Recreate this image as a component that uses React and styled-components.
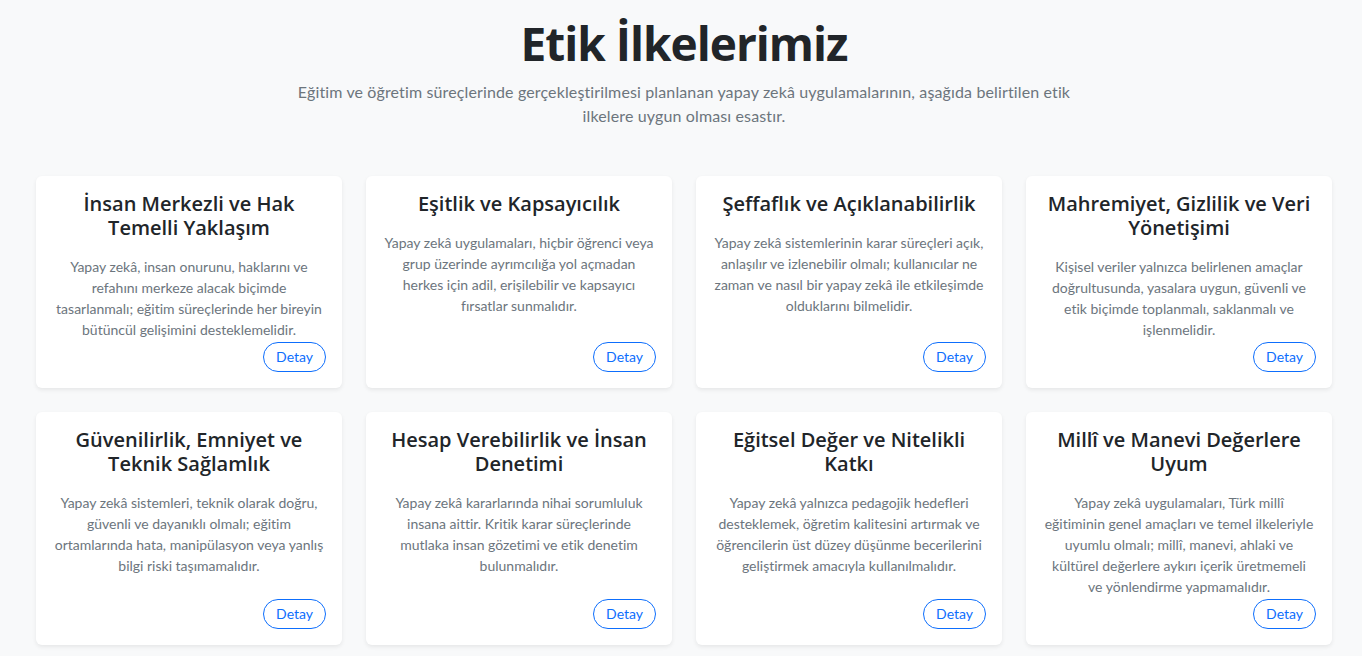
import React from "react";
import styled, { createGlobalStyle } from "styled-components";

const GlobalStyle = createGlobalStyle`
  * {
    box-sizing: border-box;
  }
  body {
    margin: 0;
    background: #f8f9fa;
    font-family: Lato, "Open Sans", sans-serif;
    font-variant-ligatures: none;
    color: #212529;
  }
`;

const Page = styled.section`
  max-width: 1320px;
  margin: 0 auto;
  padding: 15px 9px 24px 15px;
`;

const Header = styled.header`
  text-align: center;
  margin-bottom: 48px;
`;

const Title = styled.h1`
  margin: 0 0 8px;
  font-family: "Open Sans", sans-serif;
  font-size: 46px;
  line-height: 57px;
  font-weight: 700;
  letter-spacing: -1px;
  color: #212529;
`;

const Lead = styled.p`
  margin: 0 auto;
  max-width: 800px;
  font-size: 16px;
  line-height: 24px;
  letter-spacing: 0.13px;
  color: #6c757d;
`;

const Grid = styled.div`
  display: grid;
  grid-template-columns: repeat(4, 1fr);
  gap: 24px;
`;

const Card = styled.article`
  background: #fff;
  border-radius: 6px;
  box-shadow: 0 2px 4px rgba(0, 0, 0, 0.075);
  padding: 16px;
  display: flex;
  flex-direction: column;
  text-align: center;
`;

const CardTitle = styled.h3`
  margin: 0 0 16px;
  font-family: "Open Sans", sans-serif;
  font-size: 20px;
  line-height: 24px;
  font-weight: 600;
  color: #212529;
`;

const CardText = styled.p`
  margin: 0 0 2px;
  padding: 0 2.25px;
  font-size: 14px;
  line-height: 21px;
  color: #6c757d;
`;

const DetailButton = styled.button`
  margin-top: auto;
  align-self: flex-end;
  background: transparent;
  border: 1px solid #0d6efd;
  color: #0d6efd;
  border-radius: 999px;
  padding: 4px 12px;
  font-family: inherit;
  font-size: 14px;
  line-height: 20px;
  cursor: pointer;
`;

const principles = [
  {
    title: "İnsan Merkezli ve Hak Temelli Yaklaşım",
    text: "Yapay zekâ, insan onurunu, haklarını ve refahını merkeze alacak biçimde tasarlanmalı; eğitim süreçlerinde her bireyin bütüncül gelişimini desteklemelidir.",
  },
  {
    title: "Eşitlik ve Kapsayıcılık",
    text: "Yapay zekâ uygulamaları, hiçbir öğrenci veya grup üzerinde ayrımcılığa yol açmadan herkes için adil, erişilebilir ve kapsayıcı fırsatlar sunmalıdır.",
  },
  {
    title: "Şeffaflık ve Açıklanabilirlik",
    text: "Yapay zekâ sistemlerinin karar süreçleri açık, anlaşılır ve izlenebilir olmalı; kullanıcılar ne zaman ve nasıl bir yapay zekâ ile etkileşimde olduklarını bilmelidir.",
  },
  {
    title: "Mahremiyet, Gizlilik ve Veri Yönetişimi",
    text: "Kişisel veriler yalnızca belirlenen amaçlar doğrultusunda, yasalara uygun, güvenli ve etik biçimde toplanmalı, saklanmalı ve işlenmelidir.",
  },
  {
    title: "Güvenilirlik, Emniyet ve Teknik Sağlamlık",
    text: "Yapay zekâ sistemleri, teknik olarak doğru, güvenli ve dayanıklı olmalı; eğitim ortamlarında hata, manipülasyon veya yanlış bilgi riski taşımamalıdır.",
  },
  {
    title: "Hesap Verebilirlik ve İnsan Denetimi",
    text: "Yapay zekâ kararlarında nihai sorumluluk insana aittir. Kritik karar süreçlerinde mutlaka insan gözetimi ve etik denetim bulunmalıdır.",
  },
  {
    title: "Eğitsel Değer ve Nitelikli Katkı",
    text: "Yapay zekâ yalnızca pedagojik hedefleri desteklemek, öğretim kalitesini artırmak ve öğrencilerin üst düzey düşünme becerilerini geliştirmek amacıyla kullanılmalıdır.",
  },
  {
    title: "Millî ve Manevi Değerlere Uyum",
    text: "Yapay zekâ uygulamaları, Türk millî eğitiminin genel amaçları ve temel ilkeleriyle uyumlu olmalı; millî, manevi, ahlaki ve kültürel değerlere aykırı içerik üretmemeli ve yönlendirme yapmamalıdır.",
  },
];

export default function App() {
  return (
    <>
      <GlobalStyle />
      <Page>
        <Header>
          <Title>Etik İlkelerimiz</Title>
          <Lead>
            Eğitim ve öğretim süreçlerinde gerçekleştirilmesi planlanan yapay
            zekâ uygulamalarının, aşağıda belirtilen etik ilkelere uygun olması
            esastır.
          </Lead>
        </Header>
        <Grid>
          {principles.map(p => (
            <Card key={p.title}>
              <CardTitle>{p.title}</CardTitle>
              <CardText>{p.text}</CardText>
              <DetailButton>Detay</DetailButton>
            </Card>
          ))}
        </Grid>
      </Page>
    </>
  );
}
